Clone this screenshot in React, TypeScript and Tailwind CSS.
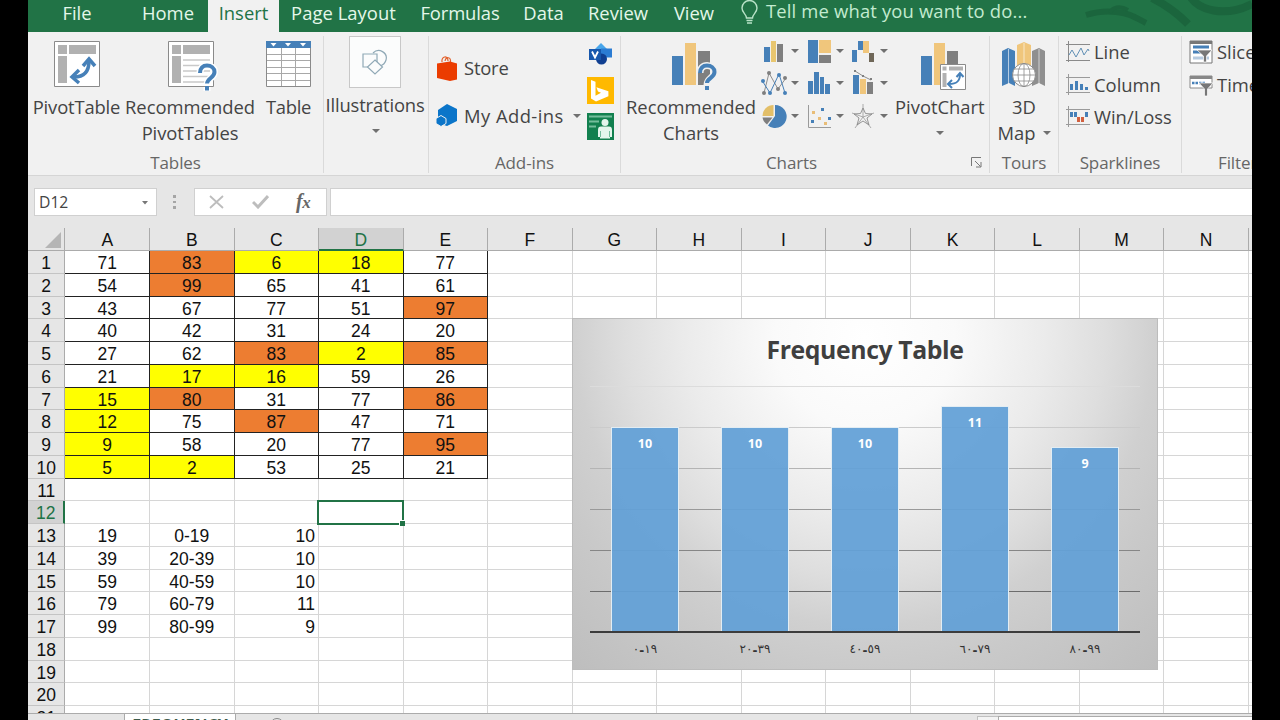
import type { ReactNode } from "react";
import clsx from "clsx";

const BLUE = "#4680b8";
const SAND = "#f0c67c";
const GRAY = "#7f7f7f";

const columns = ["A", "B", "C", "D", "E", "F", "G", "H", "I", "J", "K", "L", "M", "N", ""];

const scores = [
  [71, 83, 6, 18, 77],
  [54, 99, 65, 41, 61],
  [43, 67, 77, 51, 97],
  [40, 42, 31, 24, 20],
  [27, 62, 83, 2, 85],
  [21, 17, 16, 59, 26],
  [15, 80, 31, 77, 86],
  [12, 75, 87, 47, 71],
  [9, 58, 20, 77, 95],
  [5, 2, 53, 25, 21],
];

const bins: Record<number, string[]> = {
  13: ["19", "0-19", "10"],
  14: ["39", "20-39", "10"],
  15: ["59", "40-59", "10"],
  16: ["79", "60-79", "11"],
  17: ["99", "80-99", "9"],
};

const bars = [
  { from: "٠", to: "١٩", value: 10 },
  { from: "٢٠", to: "٣٩", value: 10 },
  { from: "٤٠", to: "٥٩", value: 10 },
  { from: "٦٠", to: "٧٩", value: 11 },
  { from: "٨٠", to: "٩٩", value: 9 },
];

export default function App() {
  return (
    <div className="h-[720px] w-[1280px] overflow-hidden bg-black pl-7 pr-7 font-['Open_Sans',sans-serif]">
      <div className="flex h-full w-[1224px] flex-col overflow-hidden bg-[#e6e6e6]">
        <TabBar />
        <Ribbon />
        <FormulaBar />
        <Sheet />
        <SheetTabs />
      </div>
    </div>
  );
}

function TabBar() {
  return (
    <div className="relative flex h-8 shrink-0 bg-[#217346] text-[18.4px] leading-[26px] text-[#e4f7ea]">
      <svg className="absolute right-0 top-0" width="170" height="32" fill="none" stroke="#1b653d" strokeWidth="6">
        <path d="M4 15c10-3 22-4 30-3 14 1 20 6 30 11" />
        <path d="M28 13c2-6 10-8 18-3" strokeWidth="4" />
        <path d="M70-2c12 6 24 14 36 26" strokeWidth="8" />
        <path d="M108-4c8 14 34 22 62 8" strokeWidth="8" />
      </svg>
      <div className="w-[98px] text-center">File</div>
      <div className="w-[82px] pl-[2px] text-center">Home</div>
      <div className="w-[71px] bg-[#f1f1f1] text-center text-[#217346]">Insert</div>
      <div className="w-[129px] text-center tracking-[0.05px]">Page Layout</div>
      <div className="w-[104px] text-center tracking-[-0.1px]">Formulas</div>
      <div className="w-[63px] text-center">Data</div>
      <div className="w-[86px] text-center">Review</div>
      <div className="w-[64px] pl-[2px] text-center">View</div>
      <svg className="ml-4 mr-2" width="17" height="25" fill="none" stroke="#b9e3c8" strokeWidth="1.4">
        <path d="M5.5 18c0-4-4.500-5-4.500-10a7.500 7.500 0 0 1 15 0c0 5-4.500 6-4.500 10z" />
        <path d="M5.500 20.500h6M6 23h5" />
      </svg>
      <div className="leading-[22px] tracking-[0.17px] text-[#c3ebd0]">Tell me what you want to do...</div>
    </div>
  );
}

function Ribbon() {
  return (
    <div className="flex h-36 shrink-0 border-b border-[#d5d5d5] bg-[#f1f1f1] pt-1 text-[18.4px] leading-[26px] text-[#444]">
      <Group label="Tables" className="w-[296px]">
        <BigButton className="w-[97px] tracking-[-0.15px]" icon={<PivotTableIcon />}>PivotTable</BigButton>
        <BigButton className="w-[130px]" icon={<RecommendedPivotIcon />}>
          Recommended<br />
          <span className="tracking-[-0.1px]">PivotTables</span>
        </BigButton>
        <BigButton className="w-[67px] tracking-[-0.3px]" icon={<TableIcon />}>Table</BigButton>
      </Group>
      <Group className="w-[105px]">
        <div className="flex w-full flex-col items-center pr-[2px]">
          <div className="flex h-[52px] w-[52px] items-center justify-center border border-[#c8c8c8] bg-[#fbfcfc]">
            <ShapesIcon />
          </div>
          <div className="mt-1 whitespace-nowrap tracking-[-0.15px]">Illustrations</div>
          <Caret className="ml-[2px] mt-[11px]" />
        </div>
      </Group>
      <Group label="Add-ins" className="w-[192px]">
        <div className="w-[158px] pl-[7px]">
          <div className="mt-[18px] flex h-[27px] items-center">
            <StoreIcon />
            <span className="ml-[6px] tracking-[-0.2px]">Store</span>
          </div>
          <div className="mt-[21px] flex h-[27px] items-center">
            <AddinsIcon />
            <span className="ml-[6px] whitespace-nowrap tracking-[0.450px]">My Add-ins</span>
            <Caret className="ml-[9px]" />
          </div>
        </div>
        <div className="flex flex-col">
          <VisioIcon />
          <BingIcon />
          <PeopleIcon />
        </div>
      </Group>
      <Group label="Charts" className="w-[369px]" labelClass="pr-[27px]" launcher>
        <BigButton className="w-[140px]" icon={<RecommendedChartsIcon />}>Recommended<br />Charts</BigButton>
        <div className="-mt-px grid h-[97px] w-[134px] grid-cols-3 grid-rows-3">
          {[ColumnIcon, TreemapIcon, WaterfallIcon, LineIcon, HistogramIcon, ComboIcon, PieIcon, ScatterIcon, RadarIcon].map((Icon, i) => (
            <div key={i} className="flex items-center">
              <Icon />
              <Caret className="ml-1" />
            </div>
          ))}
        </div>
        <BigButton className="w-[89px]" icon={<PivotChartIcon />}>
          PivotChart
          <Caret className="mx-auto mt-[11px]" />
        </BigButton>
      </Group>
      <Group label="Tours" className="w-[69px]">
        <BigButton className="w-full" icon={<MapIcon />}>
          3D
          <div className="flex items-center justify-center">Map<Caret className="ml-[7px]" /></div>
        </BigButton>
      </Group>
      <Group label="Sparklines" className="w-[123px]">
        <div className="flex flex-col">
          <SmallButton icon={<SparkLineIcon />}>Line</SmallButton>
          <SmallButton icon={<SparkColumnIcon />}>Column</SmallButton>
          <SmallButton icon={<SparkWinLossIcon />}>Win/Loss</SmallButton>
        </div>
      </Group>
      <Group label="Filters" className="w-[140px] shrink-0" labelClass="!text-left pl-9">
        <div className="flex flex-col">
          <SmallButton icon={<SlicerIcon />}>Slicer</SmallButton>
          <SmallButton icon={<TimelineIcon />}>Timeline</SmallButton>
        </div>
      </Group>
    </div>
  );
}

type GroupProps = { label?: string; className: string; labelClass?: string; launcher?: boolean; children: ReactNode };

function Group({ label, className, labelClass, launcher, children }: GroupProps) {
  return (
    <div className={clsx("relative h-[137px] shrink-0 border-r border-[#dadada]", className)}>
      <div className="flex h-[117px]">{children}</div>
      <div className={clsx("text-center text-[17px] leading-5 tracking-[-0.1px] text-[#666]", labelClass)}>{label}</div>
      {launcher && (
        <svg className="absolute bottom-[5px] right-[7px]" width="11" height="11" fill="none" stroke="#777">
          <path d="M.5 9V.5H10M4 4l5.500 5.500M10 5v5H5" />
        </svg>
      )}
    </div>
  );
}

function BigButton({ icon, className, children }: { icon: ReactNode; className: string; children: ReactNode }) {
  return (
    <div className={clsx("shrink-0 whitespace-nowrap text-center", className)}>
      <div className="flex h-[58px] justify-center pt-[5px]">{icon}</div>
      {children}
    </div>
  );
}

function SmallButton({ icon, children }: { icon: ReactNode; children: ReactNode }) {
  return (
    <div className="flex h-[32.500px] items-center pl-[7px]">
      {icon}
      <span className="ml-[4px]">{children}</span>
    </div>
  );
}

function Caret({ className }: { className?: string }) {
  return (
    <svg className={clsx("shrink-0", className)} width="8" height="4">
      <path d="M0 0h8L4 4z" fill="#707070" />
    </svg>
  );
}

function PivotTableIcon() {
  return (
    <svg width="46" height="46">
      <path d="M.5.500h45v45H.5z" fill="#fff" stroke="#8a8a8a" />
      <path d="M4 4h9v9H4zM15 4h27v9H15zM4 15h9v27H4z" fill="#b1b1b1" />
      <path d="M20 36c10 0 15-5 15-16" fill="none" stroke={BLUE} strokeWidth="3.500" />
      <path d="M29 25l6-7 6 7M25 29l-7 7 7 6" fill="none" stroke={BLUE} strokeWidth="3.500" />
    </svg>
  );
}

function RecommendedPivotIcon() {
  return (
    <svg className="overflow-visible" width="46" height="46">
      <g transform="translate(1 0)">
        <path d="M.5.500h45v45H.5z" fill="#fff" stroke="#8a8a8a" />
        <path d="M4 4h9v9H4zM15 4h27v9H15zM4 15h9v27H4z" fill="#b1b1b1" />
        <path d="M15 19h27M15 24.500h27M15 30h27M15 35.500h27M15 41h27" stroke="#c9c9c9" strokeWidth="1.500" />
        <path d="M32 32c0-5 3-7.500 7-7.500s7.500 2.500 7.500 6.500c0 6-7.500 6-7.500 13M39 46v4" fill="none" stroke="#fff" strokeWidth="7" />
        <path d="M32 32c0-5 3-7.500 7-7.500s7.500 2.500 7.500 6.500c0 6-7.500 6-7.500 12M39 45v4.500" fill="none" stroke={BLUE} strokeWidth="4" />
        <path d="M36 43.500h6" stroke="#fff" strokeWidth="2" />
      </g>
    </svg>
  );
}

function TableIcon() {
  return (
    <svg width="46" height="46">
      <path d="M.5.500h44v45H.5z" fill="#fff" stroke="#8a8a8a" />
      <path d="M0 0h45v7H0z" fill={BLUE} />
      <path d="M4.500 2h6l-3 3.500zM19 2h6l-3 3.500zM34 2h6l-3 3.500z" fill="#fff" />
      <path d="M1 13.500h43M1 19.500h43M1 26.500h43M1 32.500h43M1 39.500h43M15.500 7v38M29.500 7v38" stroke="#a8a8a8" />
    </svg>
  );
}

function ShapesIcon() {
  return (
    <svg width="26" height="26" fill="#fbfcfc" stroke="#90a9b6" strokeWidth="1.200">
      <path d="M11 4c6-6 15 0 13 7-1 4-3 5-6 6" />
      <path d="M1 5h14v13H1z" />
      <path d="M13 11l7.500 7-7.500 7-7.500-7z" />
    </svg>
  );
}

function StoreIcon() {
  return (
    <svg width="22" height="26">
      <path d="M6 7c-1-6 6-7 6-1M9 6c1-5 6-4 5.500 1" fill="none" stroke="#e2632f" strokeWidth="1.200" />
      <path d="M1 8.500l13-2 7 2v16l-7 1.500-13-3z" fill="#eb3c00" />
    </svg>
  );
}

function AddinsIcon() {
  return (
    <svg width="22" height="24">
      <path d="M11 0l10 5v12l-10 5-9-3V6z" fill="#0b75c9" />
      <path d="M0 14.500l5-3 5 3v5l-5 3-5-3z" fill="#0b75c9" stroke="#f1f1f1" />
    </svg>
  );
}

function VisioIcon() {
  return (
    <svg className="ml-[2px] mt-[7px]" width="23" height="23">
      <path d="M12 0l6 6-6 6-6-6z" fill="#48a5ea" />
      <path d="M12 5.500h11v9H12z" fill="#2b7cd3" />
      <circle cx="12.500" cy="16" r="5.500" fill="#103f91" />
      <path d="M0 6h12v11H0z" fill="#1757ac" />
      <path d="M3 8.500l3 6 3-6" fill="none" stroke="#fff" strokeWidth="1.800" />
    </svg>
  );
}

function BingIcon() {
  return (
    <svg className="mt-[11px]" width="27" height="27">
      <path d="M0 0h27v27H0z" fill="#ffb900" />
      <path d="M4 3l4.500 1.800v14l5.500-3-3-1.300-1.600-4.200 12 4v5L9 24.500 4 21.500z" fill="#fff" />
    </svg>
  );
}

function PeopleIcon() {
  return (
    <svg className="mt-[9px]" width="27" height="27">
      <path d="M0 0h27v27H0z" fill="#12804f" />
      <path d="M2 3.500h23M2 8.500h10M2 13.500h7" stroke="#74bd9c" strokeWidth="2" />
      <circle cx="18" cy="9.500" r="3.500" fill="#e3f6ec" />
      <path d="M11 24v-7c0-2.500 1-3.500 3-3.500h8c2 0 3 1 3 3.500v7h-2v1.500H13V24z" fill="#e3f6ec" />
      <path d="M13.500 18v6M22.500 18v6" stroke="#74bd9c" />
    </svg>
  );
}

function RecommendedChartsIcon() {
  return (
    <svg className="overflow-visible" width="38" height="46">
      <path d="M0 15h11v29H0z" fill={BLUE} />
      <path d="M13 2h11v42H13z" fill={SAND} />
      <path d="M26 10h12v34H26z" fill={GRAY} />
      <path d="M28 32c0-5 3-7.500 7-7.500s7.500 2.500 7.500 6.500c0 6-7.500 6-7.500 13M35 45v5" fill="none" stroke="#f1f1f1" strokeWidth="7" />
      <path d="M28 32c0-5 3-7.500 7-7.500s7.500 2.500 7.500 6.500c0 6-7.500 6-7.500 11M35 45v4" fill="none" stroke={BLUE} strokeWidth="4" />
    </svg>
  );
}

function ColumnIcon() {
  return (
    <svg width="26" height="26">
      <path d="M3 9h6v15H3z" fill={BLUE} />
      <path d="M10 3h5v21h-5z" fill="#e8c66f" />
      <path d="M16 6h6v18h-6z" fill={GRAY} />
    </svg>
  );
}

function TreemapIcon() {
  return (
    <svg width="26" height="26">
      <path d="M2 2h10v23H2z" fill={BLUE} />
      <path d="M13 2h12v13H13z" fill={SAND} />
      <path d="M13 17h12v8H13z" fill={GRAY} />
    </svg>
  );
}

function WaterfallIcon() {
  return (
    <svg width="26" height="26">
      <path d="M2 12h5v12H2zM8 3h5v9H8z" fill={BLUE} />
      <path d="M13 3h6v12h-6z" fill={SAND} />
      <path d="M19 15h5v9h-5z" fill="#6f6758" />
    </svg>
  );
}

function LineIcon() {
  return (
    <svg width="26" height="26" fill="none">
      <path d="M3 23l5-20 9 16 8-11" stroke="#8d8d8d" />
      <path d="M2 12l7 11 9-19 6 19" stroke={BLUE} />
      <g fill={GRAY}>
        <circle cx="3" cy="23" r="2" />
        <circle cx="8" cy="3" r="2" />
        <circle cx="17" cy="19" r="2" />
        <circle cx="24" cy="8" r="2" />
      </g>
      <g fill={BLUE}>
        <circle cx="2" cy="11" r="2" />
        <circle cx="9" cy="23" r="2" />
        <circle cx="18" cy="5" r="2" />
        <circle cx="24" cy="23" r="2" />
      </g>
    </svg>
  );
}

function HistogramIcon() {
  return (
    <svg width="26" height="26">
      <path d="M2 11h5v13H2zM8 2h5v22H8zM14 7h4v17h-4zM19 14h5v10h-5z" fill={BLUE} />
    </svg>
  );
}

function ComboIcon() {
  return (
    <svg width="26" height="26">
      <path d="M3 5h6v19H3z" fill={BLUE} />
      <path d="M10 9h6v15h-6z" fill={SAND} />
      <path d="M17 12h6v12h-6z" fill={GRAY} />
      <path d="M5 1l8 5 8 4" fill="none" stroke="#8d8d8d" />
      <path d="M4 0h2v2H4zM12 5h2v2h-2zM20 8h2v2h-2z" fill={GRAY} />
    </svg>
  );
}

function PieIcon() {
  return (
    <svg width="26" height="26">
      <path d="M14 2a11.500 11.500 0 1 1-7 20.500L14 13z" fill={BLUE} />
      <path d="M12.500 2v11H1.500a11 11 0 0 1 11-11z" fill="#e3bf68" />
      <path d="M1.500 14.500h10L6 21.500a11 11 0 0 1-4.500-7z" fill={GRAY} />
    </svg>
  );
}

function ScatterIcon() {
  return (
    <svg width="26" height="26">
      <path d="M2.500 2v22.500H25" fill="none" stroke="#9a9a9a" />
      <path d="M15 5h3v3h-3zM22 14h3v3h-3zM5 17h3v3H5z" fill={BLUE} />
      <path d="M6 8h3v3H6zM12 14h3v3h-3zM18 19h3v3h-3z" fill="#e9bd77" />
    </svg>
  );
}

function RadarIcon() {
  return (
    <svg width="26" height="26" fill="none" stroke="#a3a3a3" strokeWidth="0.900">
      <path d="M13 1v13M2 10l11 4 11-4M5 25l8-11 8 11" />
      <path d="M13 5l2.500 5.500 6.500.5-5 4 2 7-6-4-6 4 2-7-5-4 6.500-.5z" stroke="#8a8a8a" />
    </svg>
  );
}

function PivotChartIcon() {
  return (
    <svg className="overflow-visible" width="38" height="46">
      <path d="M0 15h11v29H0z" fill={BLUE} />
      <path d="M13 2h11v42H13z" fill={SAND} />
      <path d="M26 10h11v20H26z" fill={GRAY} />
      <path d="M19.500 23.500h25v25h-25z" fill="#fff" stroke="#8a8a8a" />
      <path d="M21.500 25.500h4v4h-4zM28 25.500h14v4H28zM21.500 32h4v14h-4z" fill="#b1b1b1" />
      <path d="M28 43c8 0 11-3 11-10M35.500 36l3.500-4 3.500 4M31 39l-4 4 4 4" fill="none" stroke={BLUE} strokeWidth="2" />
    </svg>
  );
}

function MapIcon() {
  return (
    <svg width="44" height="46">
      <path d="M0 10l6-3 7 3v35l-6-3-7 3z" fill={BLUE} />
      <path d="M15 4l7-3 7 3v39H15z" fill={SAND} />
      <path d="M30 10l7-3 6 3v35l-6-3-7 3z" fill="#8f8f8f" />
      <path d="M6.500 8v35M22 2v20M37 8v35" stroke="#fff" strokeOpacity=".6" />
      <circle cx="22" cy="34" r="11.500" fill="#fff" stroke="#8a8a8a" />
      <path d="M22 22v24M10.500 34h23M12.500 28h19M12.500 40h19" stroke="#8a8a8a" strokeWidth=".8" />
      <ellipse cx="22" cy="34" rx="6" ry="11.500" fill="none" stroke="#8a8a8a" strokeWidth=".8" />
    </svg>
  );
}

function SparkLineIcon() {
  return (
    <svg width="24" height="22" fill="none" stroke="#8a8a8a">
      <path d="M2.500 0v21M0 3.500h24M0 19.500h24" />
      <path d="M3 14l3-5 4 7 5-9 3 7 4-6 1 2" stroke="#6190b5" />
    </svg>
  );
}

function SparkColumnIcon() {
  return (
    <svg width="24" height="22">
      <path d="M2.500 0v21M0 3.500h24M0 18.500h24" stroke="#9a9a9a" />
      <path d="M4 10h3v6H4zM9 7h3v9H9zM14 10h3v6h-3zM19 13h3v3h-3z" fill={BLUE} />
    </svg>
  );
}

function SparkWinLossIcon() {
  return (
    <svg width="24" height="22">
      <path d="M2.500 0v21M0 3.500h24M0 18.500h24" stroke="#9a9a9a" />
      <path d="M4 6h3v5H4zM8 6h3v5H8zM19 6h3v5h-3z" fill={BLUE} />
      <path d="M11 11h3v5h-3zM15 11h3v5h-3z" fill="#d2603f" />
    </svg>
  );
}

function SlicerIcon() {
  return (
    <svg width="24" height="24">
      <path d="M1 1h22v22H1z" fill="#fff" stroke="#777" />
      <path d="M1 1h22v3H1z" fill="#777" />
      <path d="M4 7h16M4 12h9" stroke={BLUE} strokeWidth="3" />
      <path d="M4 18h16" stroke="#b6cbe0" strokeWidth="3" />
      <path d="M8 10h15l-5.500 6v6h-3v-6z" fill="#777" stroke="#fff" strokeWidth=".7" />
    </svg>
  );
}

function TimelineIcon() {
  return (
    <svg className="mt-[3px]" width="24" height="22">
      <path d="M1 1h22v12H1z" fill="#fff" stroke="#888" />
      <path d="M1 1h22v3H1z" fill="#888" />
      <path d="M3 8h14" stroke={BLUE} strokeWidth="2.500" strokeDasharray="2.500 1" />
      <path d="M10 8h14l-5.500 6v7h-3v-7z" fill="#777" stroke="#fff" strokeWidth=".7" />
    </svg>
  );
}

function FormulaBar() {
  return (
    <div className="flex h-[52px] shrink-0 pl-[6px] pt-3">
      <div className="flex h-7 w-[123px] items-center justify-between border border-[#d0d0d0] bg-white pl-[4px] pr-2 pt-px text-[15.700px] text-[#444]">
        D12
        <svg width="6" height="4"><path d="M0 0h6L3 3.500z" fill="#777" /></svg>
      </div>
      <div className="flex w-[35px] flex-col items-center gap-[3px] pt-[7px]">
        <i className="size-[2.500px] bg-[#a5a5a5]" />
        <i className="size-[2.500px] bg-[#a5a5a5]" />
        <i className="size-[2.500px] bg-[#a5a5a5]" />
      </div>
      <div className="ml-[2px] flex h-7 w-[133px] items-center border border-[#d0d0d0] bg-white pl-[14px]">
        <svg width="15" height="14" stroke="#bdbdbd" strokeWidth="1.800"><path d="M1 1l13 12M14 1L1 13" /></svg>
        <svg className="ml-[28px]" width="17" height="14" fill="none" stroke="#bdbdbd" strokeWidth="3"><path d="M1 7l5 5L16 1" /></svg>
        <span className="ml-[27px] font-['Liberation_Serif',serif] text-[20px] font-bold italic leading-6 tracking-[-0.500px] text-[#666]">
          f<span className="text-[17px]">x</span>
        </span>
      </div>
      <div className="ml-[3px] h-7 flex-1 border border-r-0 border-[#d0d0d0] bg-white" />
    </div>
  );
}

function Sheet() {
  return (
    <div className="relative h-[485px] shrink-0 overflow-hidden bg-white font-['Liberation_Sans',sans-serif] text-[17.500px] text-[#111]">
      <div className="flex h-[23px] w-[1310px] bg-[#e6e6e6] leading-[24px]">
        <div className="flex w-[37.460px] items-end justify-end border-b border-r border-[#ababab] pb-[2px] pr-[3px]">
          <svg width="16" height="16"><path d="M16 0v16H0z" fill="#b5b5b5" /></svg>
        </div>
        {columns.map((name, i) => (
          <div
            key={i}
            className={clsx(
              "w-[84.540px] border-b border-r text-center",
              name === "D" ? "border-b-2 border-r-[#ababab] border-b-[#217346] bg-[#d2d2d2] text-[#217346]" : "border-[#ababab]"
            )}
          >
            {name}
          </div>
        ))}
      </div>
      {Array.from({ length: 21 }, (_, i) => (
        <SheetRow key={i} row={i + 1} />
      ))}
      {/* active cell */}
      <div className="absolute left-[289px] top-[272px] h-[25px] w-[87px] border-2 border-[#217346]">
        <div className="absolute -bottom-[3px] -right-[3px] size-[6px] border-l border-t border-white bg-[#217346]" />
      </div>
      <Chart />
    </div>
  );
}

function SheetRow({ row }: { row: number }) {
  const active = row === 12;
  return (
    <div className="flex h-[22.750px] w-[1310px] leading-[24px]">
      <div
        className={clsx(
          "w-[37.460px] shrink-0 border-b border-r text-center",
          active ? "border-b-[#c4c4c4] border-r-2 border-r-[#217346] bg-[#d2d2d2] text-[#217346]" : "border-b-[#c4c4c4] border-r-[#ababab] bg-[#e6e6e6]"
        )}
      >
        {row}
      </div>
      {columns.map((_, col) => {
        const score = scores[row - 1]?.[col];
        const hasScore = score !== undefined;
        return (
          <div
            key={col}
            className={clsx(
              "w-[84.540px] shrink-0 border-b border-r",
              hasScore ? "border-[#222]" : "border-[#d6d6d6]",
              hasScore && score < 20 && "bg-[#ffff00]",
              hasScore && score >= 80 && "bg-[#ed7d31]",
              !hasScore && col === 2 ? "pr-[3px] text-right" : "text-center"
            )}
          >
            {score ?? bins[row]?.[col]}
          </div>
        );
      })}
    </div>
  );
}

function Chart() {
  return (
    <div className="absolute left-[544px] top-[90px] h-[352px] w-[586px] border border-[#bcbcbc] bg-[radial-gradient(circle_at_50%_5%,#ffffff_0px,#fafafa_90px,#ebebeb_180px,#dedede_240px,#d0d0d0_290px,#c9c9c9_340px,#bebebe_440px)] font-['Open_Sans',sans-serif]">
      <div className="mt-[11px] text-center text-[24.800px] font-bold leading-[38px] tracking-[-0.400px] text-[#3f3f3f]">Frequency Table</div>
      <div className="relative ml-[17px] mt-[18px] h-[247px] w-[550px] border-b-2 border-[#3c3c3c]">
        <div className="absolute inset-x-0 top-0 flex flex-col">
          <div className="h-[41px] border-t border-[#dcdcdc]" />
          <div className="h-[41px] border-t border-[#cbcbcb]" />
          <div className="h-[41px] border-t border-[#b4b4b4]" />
          <div className="h-[41px] border-t border-[#999]" />
          <div className="h-[41px] border-t border-[#868686]" />
          <div className="h-[41px] border-t border-[#6c6c6c]" />
        </div>
        <div className="relative flex h-full items-end justify-around">
          {bars.map((bar) => (
            <div
              key={bar.from}
              className="w-[68px] border border-b-0 border-[#e3edf3] bg-[#63a0d7]/94 pt-[6px] text-center text-[12.500px] font-bold leading-5 text-white"
              style={{ height: bar.value * 20.45 }}
            >
              {bar.value}
            </div>
          ))}
        </div>
      </div>
      <div className="ml-[17px] mt-[6px] flex w-[550px] justify-around font-['DejaVu_Sans',sans-serif] text-[12px] leading-5 text-[#333]">
        {bars.map((bar) => (
          <div key={bar.from} dir="ltr" className="w-[68px] text-center [unicode-bidi:bidi-override]">
            {bar.from}
            <span className="relative top-[2px] font-bold">-</span>
            {bar.to}
          </div>
        ))}
      </div>
    </div>
  );
}

function SheetTabs() {
  return (
    <div className="flex h-[7px] shrink-0 overflow-hidden border-t border-[#ababab] bg-[#e6e6e6]">
      <div className="w-[97px] border-r border-[#ababab]" />
      <div className="-mt-px h-[8px] w-[110px] bg-white pt-px text-center text-[16px] font-bold leading-[23px] text-[#3d5a4a]">FREQUENCY</div>
      <div className="w-[35px] border-l border-[#ababab]" />
      <div className="mt-[4px] size-[14px] rounded-full border border-[#888]" />
      <div className="ml-[693px] mt-[2px] w-[21px] border-l border-t border-[#c0c0c0] bg-[#f4f4f4]" />
      <div className="mt-[2px] flex-1 border-l border-t border-[#ababab] bg-white" />
    </div>
  );
}
